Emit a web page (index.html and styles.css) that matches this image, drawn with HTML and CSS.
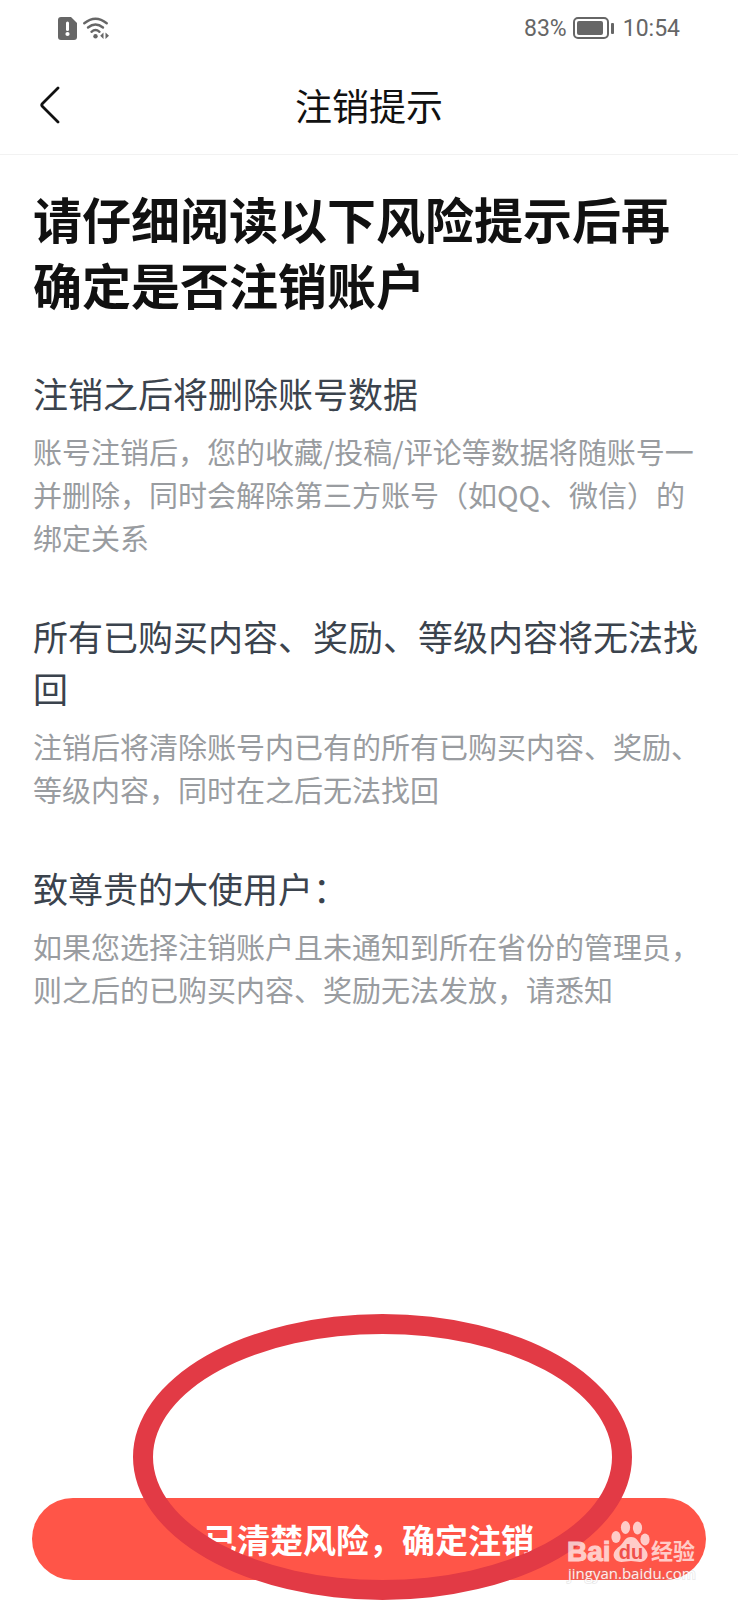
FILE: index.html
```html
<!DOCTYPE html>
<html lang="zh-CN">
<head>
    <meta charset="UTF-8">
    <meta name="viewport" content="width=device-width, initial-scale=1.0">
    <title>注销提示</title>
    <link rel="stylesheet" href="styles.css">
</head>
<body>
    <!-- Status bar -->
    <div class="status-bar">
        <div class="status-group">
            <svg width="19" height="23" viewBox="0 0 19 23" aria-hidden="true">
                <path d="M3 0H13L19 6V20Q19 23 16 23H3Q0 23 0 20V3Q0 0 3 0Z" fill="#666"/>
                <path d="M9.500 6V12.500" stroke="#fff" stroke-width="3" stroke-linecap="round"/>
                <circle cx="9.500" cy="17" r="2.100" fill="#fff"/>
            </svg>
            <svg width="26" height="23" viewBox="0 0 26 23" aria-hidden="true">
                <g fill="none" stroke="#666" stroke-width="2.400" stroke-linecap="round">
                    <path d="M1.300 6.300Q12.500 -2.800 23.700 6.300"/>
                    <path d="M5 10.500Q12.500 4.300 20 10.500"/>
                    <path d="M8.500 14.800Q12.500 11.200 16.500 14.800"/>
                </g>
                <circle cx="12.500" cy="19.300" r="2.200" fill="#666"/>
                <path d="M20.500 15.500V22L17.200 18.700ZM22.500 15.500L26 18.700L22.500 22Z" fill="#666"/>
            </svg>
        </div>
        <div class="status-group">
            <span>83%</span>
            <svg width="41" height="22" viewBox="0 0 41 22" aria-hidden="true">
                <rect x="1" y="1" width="34" height="20" rx="4" fill="none" stroke="#666" stroke-width="2"/>
                <rect x="4" y="4" width="26" height="14" rx="2" fill="#666"/>
                <rect x="38" y="6" width="3" height="11" rx="1" fill="#666"/>
            </svg>
            <span class="time">10:54</span>
        </div>
    </div>

    <!-- Header -->
    <header class="header">
        <button type="button" class="back" aria-label="返回">
            <svg width="20" height="38" viewBox="0 0 20 38" aria-hidden="true">
                <path d="M18 2L2.500 17.500Q1 19 2.500 20.500L18 36" fill="none" stroke="#111" stroke-width="2.800" stroke-linecap="round"/>
            </svg>
        </button>
        <h1>注销提示</h1>
    </header>

    <!-- Content -->
    <main class="content">
        <h2>请仔细阅读以下风险提示后再确定是否注销账户</h2>
        <section>
            <h3>注销之后将删除账号数据</h3>
            <p>账号注销后，您的收藏/投稿/评论等数据将随账号一并删除，同时会解除第三方账号（如QQ、微信）的绑定关系</p>
        </section>
        <section>
            <h3>所有已购买内容、奖励、等级内容将无法找回</h3>
            <p>注销后将清除账号内已有的所有已购买内容、奖励、等级内容，同时在之后无法找回</p>
        </section>
        <section>
            <h3>致尊贵的大使用户：</h3>
            <p>如果您选择注销账户且未通知到所在省份的管理员，则之后的已购买内容、奖励无法发放，请悉知</p>
        </section>
    </main>

    <!-- Confirm button -->
    <footer class="footer">
        <button type="button" class="confirm">已清楚风险，确定注销</button>
        <div class="ring"></div>
        <svg class="watermark" width="150" height="74" viewBox="0 0 150 74">
            <g class="mark">
                <text class="mark-logo" x="5" y="45">Bai</text>
                <ellipse cx="54" cy="21" rx="4.600" ry="6"/>
                <ellipse cx="63.500" cy="11.500" rx="4.600" ry="6.500"/>
                <ellipse cx="75.500" cy="12" rx="4.600" ry="6.500"/>
                <ellipse cx="83" cy="23.500" rx="4.600" ry="6"/>
                <path d="M69 21C75 21 76 26 80 30C86 35 87 40 84 43C80 48 75 45 69 45C63 45 57 48 53 43C50 39 52 34 58 30C62 26 63 21 69 21Z"/>
                <text class="mark-cn" x="89" y="43">经验</text>
            </g>
            <text class="mark-du" x="69" y="43">du</text>
            <text class="mark-url" x="6" y="63">jingyan.baidu.com</text>
        </svg>
    </footer>
</body>
</html>
```
FILE: styles.css
```css
/* General Styles */
* {
    box-sizing: border-box;
}
body {
    display: flex;
    flex-direction: column;
    min-height: 100vh;
    margin: 0;
    background-color: #fff;
    font-family: "Noto Sans CJK SC", sans-serif;
}
h1, h2, h3, p {
    margin: 0;
    font-weight: 400;
}
button {
    border: none;
    cursor: pointer;
    font-family: inherit;
}
svg {
    display: block;
}

/* Status Bar */
.status-bar {
    display: flex;
    justify-content: space-between;
    align-items: center;
    height: 56px;
    padding: 0 58px;
    color: #666;
    font-family: Roboto, sans-serif;
    font-size: 23px;
}
.status-group {
    display: flex;
    align-items: center;
    gap: 6px;
}
.time {
    margin-left: 3px;
}

/* Header */
.header {
    display: grid;
    grid-template-columns: 1fr auto 1fr;
    align-items: center;
    height: 99px;
    padding: 0 32px;
    border-bottom: 1px solid #f2f2f2;
}
.back {
    justify-self: start;
    padding: 8px;
    background: none;
}
.header h1 {
    color: #111;
    font-size: 37px;
    line-height: 52px;
}

/* Content */
.content {
    flex: 1;
    padding: 30px 32px 52px 33px;
}
.content h2 {
    margin-bottom: 50px;
    color: #111;
    font-size: 49px;
    font-weight: 700;
    line-height: 66px;
}
.content section {
    margin-bottom: 51px;
}
.content h3 {
    margin-bottom: 11px;
    color: #3b434d;
    font-size: 35px;
    line-height: 52px;
}
.content p {
    color: #999ca0;
    font-size: 29px;
    line-height: 43px;
}

/* Footer */
.footer {
    position: relative;
    padding: 0 32px 20px;
}
.confirm {
    display: block;
    width: 100%;
    height: 82px;
    border-radius: 41px;
    background-color: #ff5548;
    color: #fff;
    font-size: 33px;
    font-weight: 700;
}
.ring {
    position: absolute;
    left: 18%;
    right: 106px;
    bottom: 0;
    height: 286px;
    border: 20px solid #e23a45;
    border-radius: 50%;
    pointer-events: none;
}

/* Watermark */
.watermark {
    position: absolute;
    right: 26px;
    bottom: 10px;
    pointer-events: none;
}
.mark {
    fill: #fff;
    opacity: 0.7;
}
.mark-logo {
    font: 700 28px "Liberation Sans", sans-serif;
    stroke: #fff;
    stroke-width: 1px;
}
.mark-cn {
    font-size: 22px;
    font-weight: 700;
}
.mark-du {
    fill: #f0504a;
    font: 700 20px "Liberation Sans", sans-serif;
    text-anchor: middle;
}
.mark-url {
    fill: #fff;
    opacity: 0.9;
    font: 15px "Open Sans", sans-serif;
    paint-order: stroke;
    stroke: rgba(150, 150, 150, 0.2);
    stroke-width: 2px;
}
```
